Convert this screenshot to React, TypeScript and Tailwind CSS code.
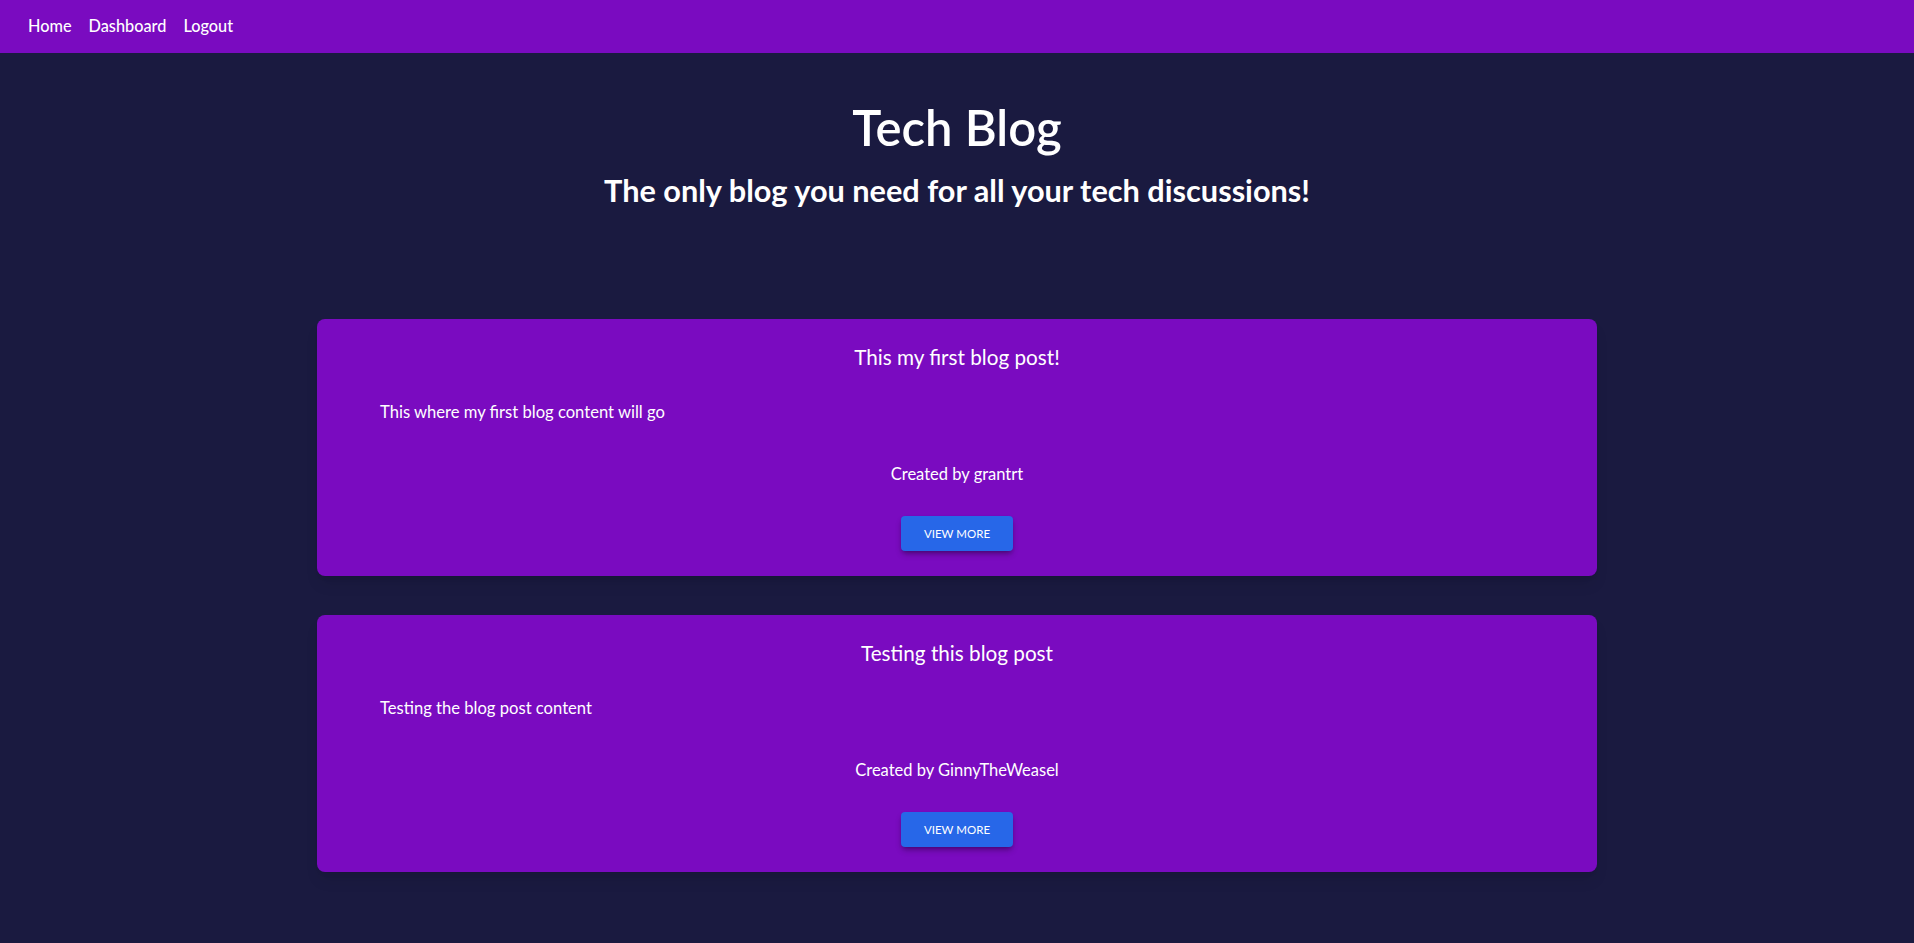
const posts = [
  {
    id: 1,
    title: "This my first blog post!",
    content: "This where my first blog content will go",
    author: "grantrt",
  },
  {
    id: 2,
    title: "Testing this blog post",
    content: "Testing the blog post content",
    author: "GinnyTheWeasel",
  },
];

const PostCard = ({ post }: { post: (typeof posts)[number] }) => {
  return (
    <div className="w-[1280px] mx-auto bg-[#7a0bc0] rounded-lg shadow-lg flex flex-col pt-[24px] pb-[25px] px-[63px]">
      <h3 className="text-center text-[20.7px] leading-[28px] text-white">{post.title}</h3>
      <p className="mt-[29px] text-[16.6px] leading-[24px] text-white">{post.content}</p>
      <p className="mt-[38px] text-center text-[16.5px] leading-[24px] text-white">
        Created by {post.author}
      </p>
      <div className="mt-[30px] flex justify-center">
        <button className="w-[112px] h-[35px] bg-[#2767e8] text-white text-[11.5px] uppercase rounded shadow-md shadow-black/30">
          View More
        </button>
      </div>
    </div>
  );
};

export default function App() {
  return (
    <div className="min-h-screen bg-[#1a1a40] font-['Lato',sans-serif] pb-[74px]">
      <nav className="h-[53px] bg-[#7a0bc0] flex items-center gap-[17px] px-[28px] text-white text-[16.3px] font-medium">
        <a href="#">Home</a>
        <a href="#">Dashboard</a>
        <a href="#">Logout</a>
      </nav>
      <header className="text-center text-white pt-[44px]">
        <h1 className="text-[49px] leading-[60px] font-semibold">Tech Blog</h1>
        <h2 className="mt-[16px] text-[30.7px] leading-[36px] font-bold">
          The only blog you need for all your tech discussions!
        </h2>
      </header>
      <main className="mt-[110px] flex flex-col gap-[39px]">
        {posts.map((post) => (
          <PostCard key={post.id} post={post} />
        ))}
      </main>
    </div>
  );
}
